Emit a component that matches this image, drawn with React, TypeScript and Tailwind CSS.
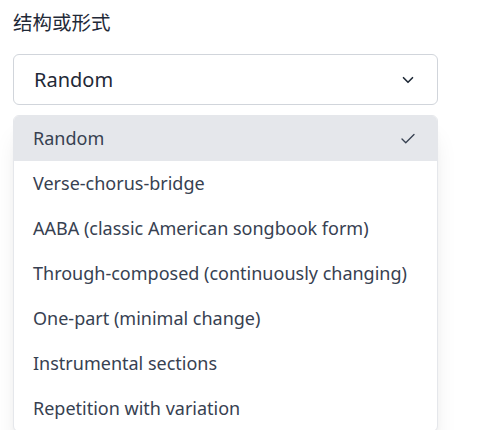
import { Check, ChevronDown } from 'lucide-react';

const options = [
  'Random',
  'Verse-chorus-bridge',
  'AABA (classic American songbook form)',
  'Through-composed (continuously changing)',
  'One-part (minimal change)',
  'Instrumental sections',
  'Repetition with variation',
];

export default function App() {
  const selected = 'Random';

  return (
    <div
      className="min-h-screen bg-white px-[13px] pt-[10px] text-[#374151]"
      style={{ fontFamily: '"Noto Sans", "Noto Sans CJK SC", sans-serif' }}
    >
      <label className="block text-[19.5px] leading-[26px] text-[#1f2937]">结构或形式</label>
      <div className="mt-[18px] w-[425px]">
        <button className="flex h-[51px] w-full items-center justify-between rounded-md border border-[#d1d5db] bg-white pl-[20px] pr-[20px] text-[20px] text-[#1f2937]">
          <span>{selected}</span>
          <ChevronDown className="h-[18px] w-[18px]" strokeWidth={2.2} />
        </button>
        <ul className="mt-[10px] overflow-hidden rounded-md border border-[#e5e7eb] bg-white shadow-xl">
          {options.map((opt) => (
            <li
              key={opt}
              className={`flex h-[45px] items-center justify-between pl-[19px] pr-[20px] text-[18px] ${opt === selected ? 'bg-[#e5e7eb]' : ''}`}
            >
              <span>{opt}</span>
              {opt === selected && <Check className="h-[18px] w-[18px]" strokeWidth={1.8} />}
            </li>
          ))}
        </ul>
      </div>
    </div>
  );
}
